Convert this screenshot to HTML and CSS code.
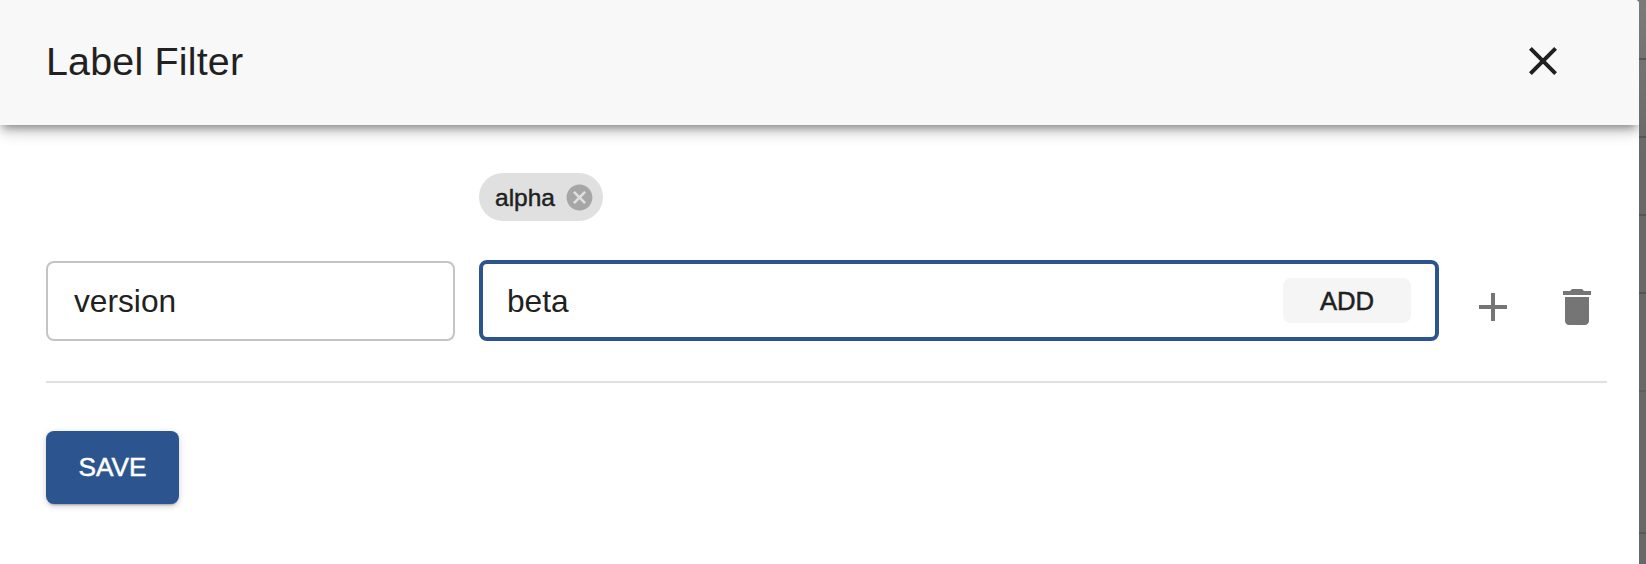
FILE: index.html
```html
<!DOCTYPE html>
<html lang="en">
<head>
<meta charset="utf-8">
<title>Label Filter</title>
<link rel="stylesheet" href="styles.css">
</head>
<body>
<div class="page">
  <main class="dialog">
    <header class="dialog-header">
      <h1 class="dialog-title">Label Filter</h1>
      <svg class="icon icon-close" viewBox="0 0 24 24"><path d="M19 6.41 17.59 5 12 10.59 6.41 5 5 6.41 10.59 12 5 17.59 6.41 19 12 13.41 17.59 19 19 17.59 13.41 12z"/></svg>
    </header>
    <section class="dialog-body">
      <div class="chip-row">
        <span class="chip">
          <span class="chip-label">alpha</span>
          <svg class="chip-delete" viewBox="0 0 24 24"><path d="M12 2C6.47 2 2 6.47 2 12s4.47 10 10 10 10-4.47 10-10S17.53 2 12 2zm5 13.59L15.59 17 12 13.41 8.41 17 7 15.59 10.59 12 7 8.41 8.41 7 12 10.59 15.59 7 17 8.41 13.41 12 17 15.59z"/></svg>
        </span>
      </div>
      <div class="filter-row">
        <div class="field field-key">version</div>
        <div class="field field-value">
          <span class="field-text">beta</span>
          <span class="add-button">ADD</span>
        </div>
        <div class="row-actions">
          <svg class="icon icon-muted" viewBox="0 0 24 24"><path d="M19 13h-6v6h-2v-6H5v-2h6V5h2v6h6v2z"/></svg>
          <svg class="icon icon-muted" viewBox="0 0 24 24"><path d="M6 19c0 1.1.9 2 2 2h8c1.1 0 2-.9 2-2V7H6v12zM19 4h-3.5l-1-1h-5l-1 1H5v2h14V4z"/></svg>
        </div>
      </div>
      <hr class="divider">
      <button class="save-button" type="button">SAVE</button>
    </section>
  </main>
  <div class="backdrop-strip">
    <div class="strip-row"></div>
    <div class="strip-row"></div>
    <div class="strip-row"></div>
    <div class="strip-row"></div>
    <div class="strip-row strip-row-tall"></div>
    <div class="strip-row strip-row-taller"></div>
  </div>
</div>
</body>
</html>
```
FILE: styles.css
```css
* { box-sizing: border-box; }

html, body {
  margin: 0;
  padding: 0;
  background: #fff;
}

body {
  font-family: "Liberation Sans", Arial, sans-serif;
  color: #212121;
}

.page {
  display: flex;
  width: 1646px;
  height: 564px;
  overflow: hidden;
  background: #686868;
}

.dialog {
  width: 1639px;
  height: 564px;
  flex: none;
  overflow: hidden;
  background: #fff;
  border-radius: 0 4px 0 0;
}

.dialog-header {
  position: relative;
  z-index: 1;
  display: flex;
  align-items: center;
  justify-content: space-between;
  height: 125px;
  padding: 0 72px 3px 46px;
  background: #f8f8f8;
  box-shadow: 0 5px 9px -3px rgba(0, 0, 0, 0.42), 0 9px 12px rgba(0, 0, 0, 0.1), 0 3px 22px rgba(0, 0, 0, 0.08);
}

.dialog-title {
  margin: 0;
  padding-top: 2px;
  font-size: 39.4px;
  font-weight: 400;
  line-height: 1.2;
  letter-spacing: 0.2px;
}

.icon {
  display: block;
  flex: none;
  width: 48px;
  height: 48px;
  fill: #212121;
}

.icon-muted { fill: #757575; }

.dialog-body {
  padding: 48px 32px 0 46px;
}

.chip-row {
  margin-left: 433px;
  height: 48px;
}

.chip {
  display: inline-flex;
  align-items: center;
  height: 48px;
  padding: 2px 8px 0 16px;
  border-radius: 24px;
  background: #e0e0e0;
}

.chip-label {
  font-size: 24.5px;
  line-height: 1;
  -webkit-text-stroke: 0.45px #212121;
}

.chip-delete {
  flex: none;
  width: 31px;
  height: 31px;
  margin: -1px 0 0 9px;
  fill: #a6a6a6;
}

.filter-row {
  display: flex;
  align-items: center;
  margin-top: 39px;
  height: 81px;
}

.field {
  display: flex;
  align-items: center;
  background: #fff;
  font-size: 31.7px;
}

.field-key {
  align-self: flex-start;
  width: 409px;
  height: 80px;
  margin-top: 1px;
  padding: 1px 0 0 26px;
  border: 2px solid #c4c4c4;
  border-radius: 8px;
}

.field-value {
  justify-content: space-between;
  width: 960px;
  height: 81px;
  margin-left: 24px;
  padding: 0 24px 0 24px;
  border: 4px solid #2c5590;
  border-radius: 8px;
}

.field-text {
  padding-top: 1px;
}

.add-button {
  display: flex;
  align-items: center;
  justify-content: center;
  width: 128px;
  height: 45px;
  padding-top: 1px;
  border-radius: 8px;
  background: #f5f5f5;
  font-size: 25.7px;
  -webkit-text-stroke: 0.5px #212121;
}

.row-actions {
  display: flex;
  gap: 36px;
  align-self: flex-start;
  margin: 23px 0 0 30px;
}

.divider {
  height: 2px;
  margin: 40px 0 0;
  border: 0;
  background: #e0e0e0;
}

.save-button {
  display: block;
  width: 133px;
  height: 73px;
  margin-top: 48px;
  padding: 0;
  border: 0;
  border-radius: 8px;
  background: #2c5590;
  color: #fff;
  font-family: inherit;
  font-size: 26.2px;
  -webkit-text-stroke: 0.5px #fff;
  box-shadow: 0 3px 2px -2px rgba(0, 0, 0, 0.25), 0 2px 6px rgba(0, 0, 0, 0.2);
}

.backdrop-strip {
  flex: 1;
  background: linear-gradient(#7a7a7a, #686868 160px);
}

.strip-row {
  height: 78px;
  border-bottom: 2px solid #565656;
}

.strip-row:first-child { height: 60px; }
.strip-row-tall { height: 98px; border-bottom-color: #5e5e5e; }
.strip-row-taller { height: 142px; border-bottom-color: #585858; }
```
